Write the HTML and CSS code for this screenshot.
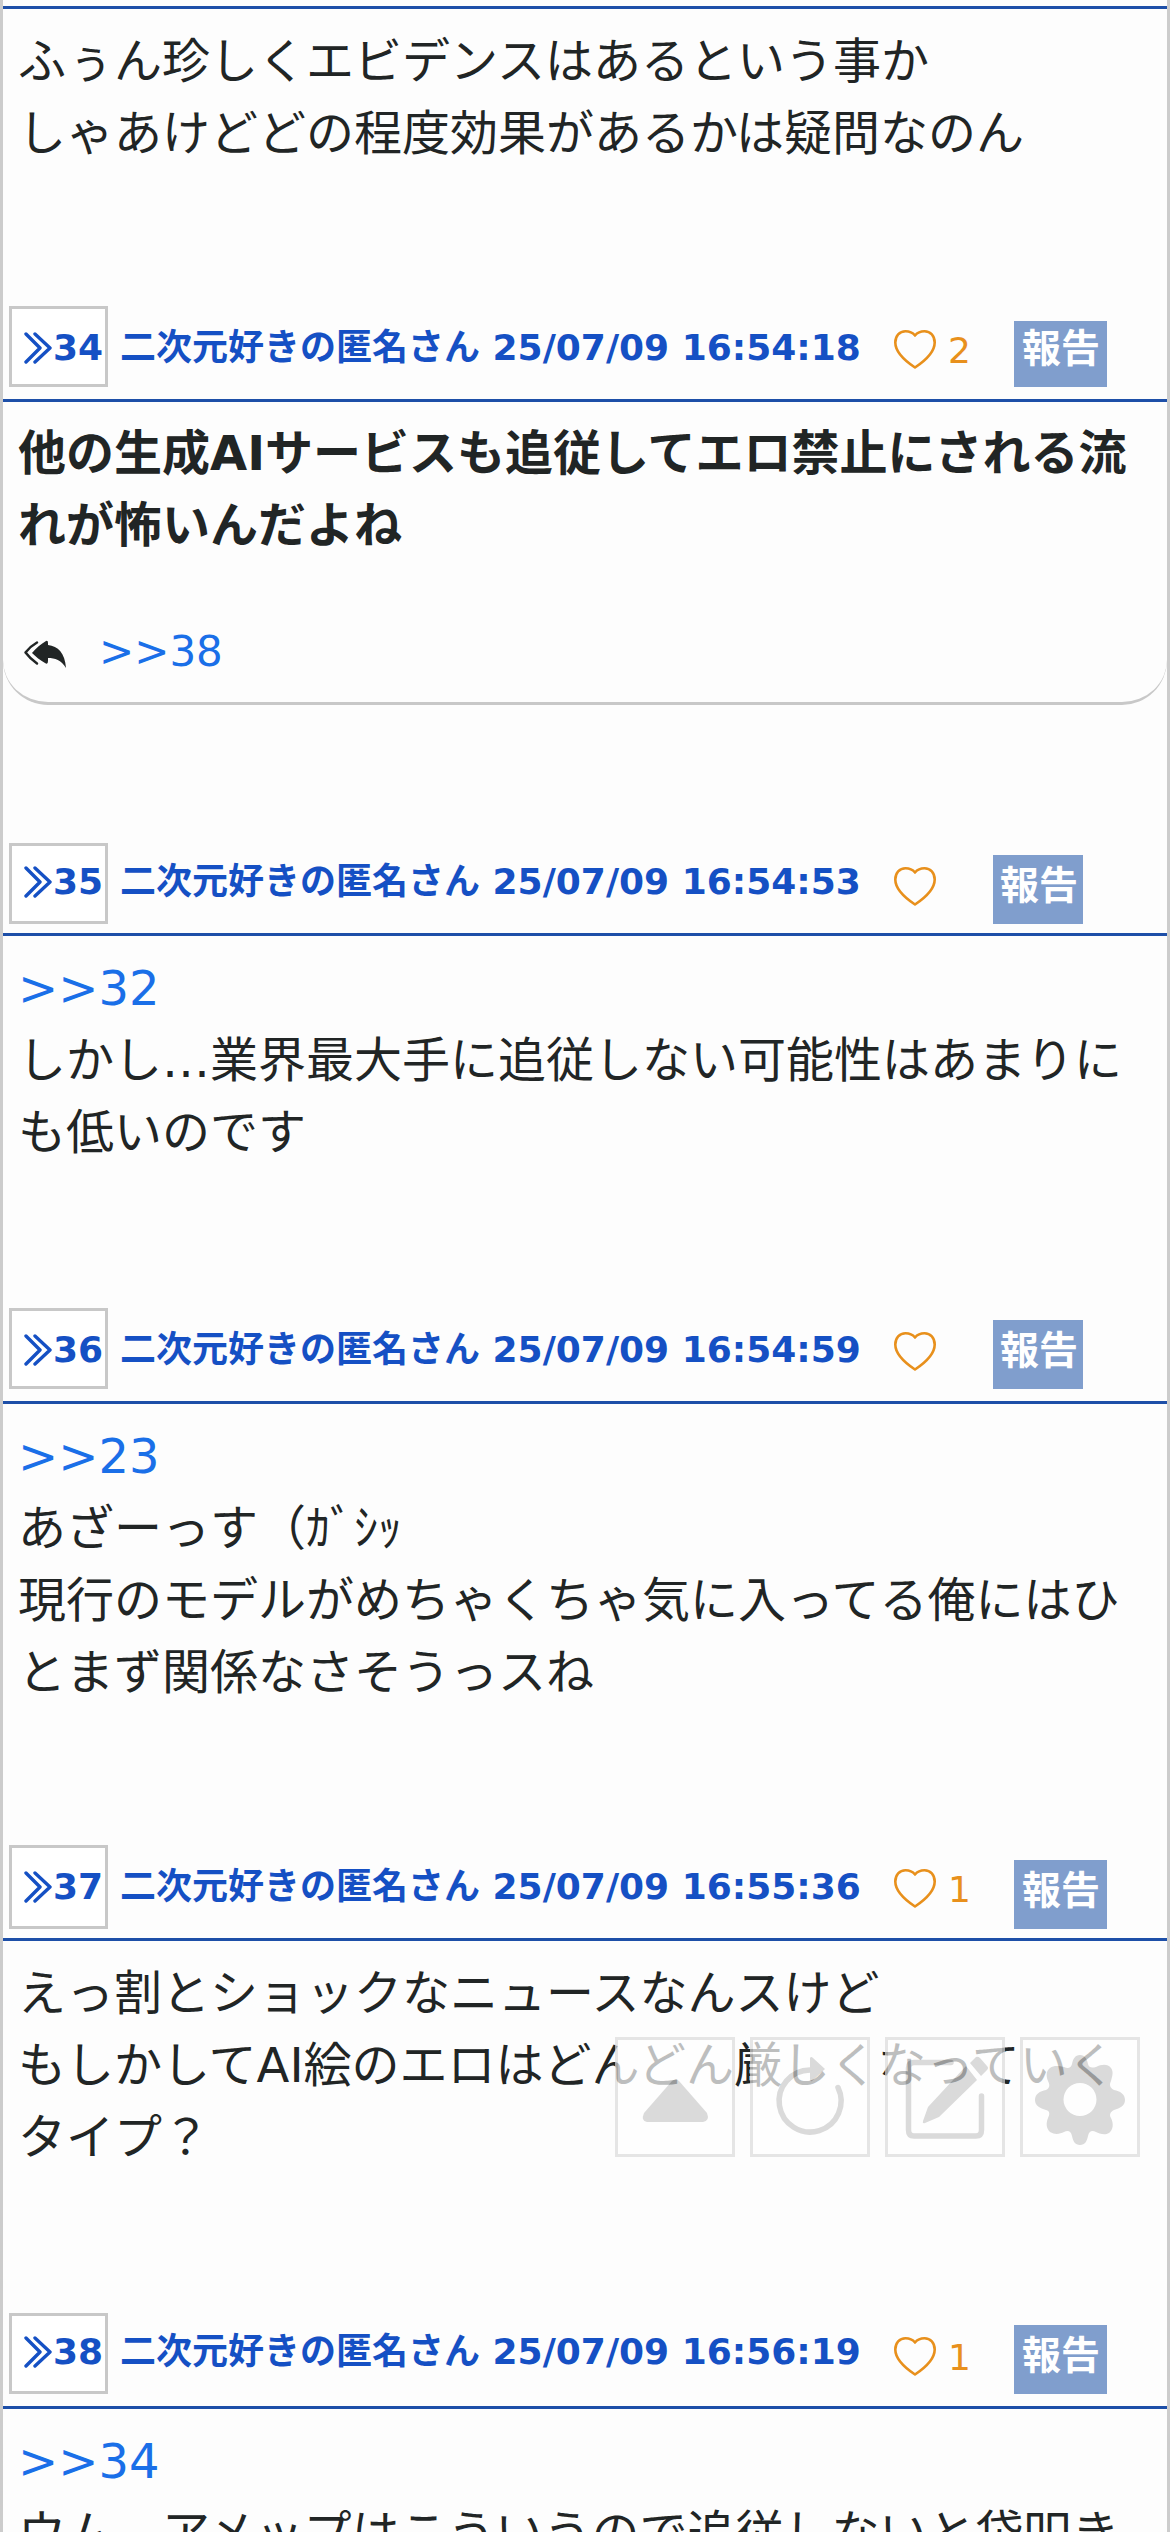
FILE: index.html
```
<!DOCTYPE html>
<html lang="ja">
<head>
<meta charset="utf-8">
<title>スレッド</title>
<link rel="stylesheet" href="styles.css">
</head>
<body>
<svg class="defs" width="0" height="0">
  <symbol id="chev" viewBox="0 0 28 32"><path d="M2 2L16 16L2 30M11 2L26 16L11 30" fill="none" stroke="currentColor" stroke-width="3.400" stroke-linecap="round" stroke-linejoin="round"/></symbol>
  <symbol id="heart" viewBox="0 0 42 39"><path d="M21 5.5C23.5 2.5 27 1.3 30.5 1.3C36.5 1.3 40.7 6 40.7 12.5C40.7 22 31.5 30.5 21 37.5C10.500 30.5 1.300 22 1.300 12.500C1.300 6 5.500 1.300 11.500 1.300C15 1.300 18.500 2.500 21 5.500Z" fill="none" stroke="currentColor" stroke-width="2.6" stroke-linejoin="round"/></symbol>
</svg>
<main class="thread">
  <article class="post first">
    <div class="body">ふぅん珍しくエビデンスはあるという事か<br>しゃあけどどの程度効果があるかは疑問なのん</div>
  </article>

  <article class="post">
    <header class="head h34">
      <span class="num"><svg class="chev"><use href="#chev"/></svg>34</span>
      <span class="name">二次元好きの匿名さん 25/07/09 16:54:18</span>
      <svg class="heart"><use href="#heart"/></svg><span class="count">2</span>
      <span class="report">報告</span>
    </header>
    <div class="body popular">他の生成AIサービスも追従してエロ禁止にされる流<br>れが怖いんだよね
      <div class="replies">
        <svg class="reply-icon" viewBox="0 0 42 27"><path d="M8 13C12 8 17 4 22 1Q24 0 24 3V5C34 6 41 13 42 28C37 20 31 18 24 18V21Q24 25 21 23C16 20 12 17 8 13Z" fill="currentColor"/><path d="M13 2.500Q6 6.500 1.500 12.500Q6 18.500 13 23.500" fill="none" stroke="currentColor" stroke-width="2.500" stroke-linecap="round" stroke-linejoin="round"/></svg>
        <a class="link">&gt;&gt;38</a>
      </div>
    </div>
  </article>

  <article class="post">
    <header class="head h35">
      <span class="num"><svg class="chev"><use href="#chev"/></svg>35</span>
      <span class="name">二次元好きの匿名さん 25/07/09 16:54:53</span>
      <svg class="heart"><use href="#heart"/></svg><span class="count empty"></span>
      <span class="report">報告</span>
    </header>
    <div class="body wide"><a class="link">&gt;&gt;32</a><br>しかし…業界最大手に追従しない可能性はあまりに<br>も低いのです</div>
  </article>

  <article class="post">
    <header class="head h36">
      <span class="num"><svg class="chev"><use href="#chev"/></svg>36</span>
      <span class="name">二次元好きの匿名さん 25/07/09 16:54:59</span>
      <svg class="heart"><use href="#heart"/></svg><span class="count empty"></span>
      <span class="report">報告</span>
    </header>
    <div class="body"><a class="link">&gt;&gt;23</a><br>あざーっす（ｶﾞｼｯ<br>現行のモデルがめちゃくちゃ気に入ってる俺にはひ<br>とまず関係なさそうっスね</div>
  </article>

  <article class="post">
    <header class="head h37">
      <span class="num"><svg class="chev"><use href="#chev"/></svg>37</span>
      <span class="name">二次元好きの匿名さん 25/07/09 16:55:36</span>
      <svg class="heart"><use href="#heart"/></svg><span class="count">1</span>
      <span class="report">報告</span>
    </header>
    <div class="body wide">えっ割とショックなニュースなんスけど<br>もしかしてAI絵のエロはどんどん厳しくなっていく<br>タイプ？</div>
  </article>

  <article class="post">
    <header class="head h38">
      <span class="num"><svg class="chev"><use href="#chev"/></svg>38</span>
      <span class="name">二次元好きの匿名さん 25/07/09 16:56:19</span>
      <svg class="heart"><use href="#heart"/></svg><span class="count">1</span>
      <span class="report">報告</span>
    </header>
    <div class="body"><a class="link">&gt;&gt;34</a><br>ウム…アメップはこういうので追従しないと袋叩き</div>
  </article>
</main>

<nav class="tools">
  <span class="tool"><svg viewBox="0 0 120 120"><path d="M57 44Q60.500 41 64 44L92 76Q95 84 88 85H32Q25.500 84 29 76Z" fill="#ccc"/></svg></span>
  <span class="tool"><svg viewBox="0 0 120 120"><path d="M88 50.500A31 31 0 1 1 60 33" fill="none" stroke="#ccc" stroke-width="5.500" stroke-linecap="round"/><path d="M60 21Q61 19 63 21L75 32L62 44Q60 45 60 42Z" fill="#ccc"/></svg></span>
  <span class="tool"><svg viewBox="0 0 120 120"><path d="M66 25.500H29Q23.500 25.500 23.500 31V93Q23.500 99 29 99H91Q96.500 99 96.500 93V59" fill="none" stroke="#ccc" stroke-width="5.500" stroke-linecap="round"/><path d="M81 29L92 43L54 80L40 86Q37 87 38 84L43 70Z M85 26L91 20Q93 19 95 21L102 29Q104 31 102 33L96 39Z" fill="#ccc"/></svg></span>
  <span class="tool"><svg viewBox="0 0 120 120"><path fill="#ccc" fill-rule="evenodd" d="M60 18C65 18 67 22 68 27C69 31 72 31 76 30C82 27 88 27 91 31C94 35 92 40 91 44C89 48 90 51 94 53C100 54 105 57 105 63C105 69 100 71 94 73C90 75 89 78 91 81C94 87 93 93 89 96C84 99 79 96 76 95C72 93 69 94 68 99C67 104 65 108 60 108C55 108 53 104 52 99C51 94 48 93 44 95C40 97 35 98 30 95C26 91 26 86 28 81C30 77 30 74 26 73C20 71 15 69 15 63C15 57 20 54 26 53C30 51 30 48 28 44C26 39 26 34 30 31C34 28 39 29 44 30C48 32 51 31 52 27C53 22 55 18 60 18ZM60 46A16.500 16.500 0 1 0 60 79A16.500 16.500 0 1 0 60 46Z"/></svg></span>
</nav>
</body>
</html>
```
FILE: styles.css
```
* { box-sizing: border-box; }
html { height: 2532px; overflow: hidden; }
body {
  margin: 0;
  height: 2532px;
  overflow: hidden;
  background: #fdfdfd;
  color: #212525;
  font-family: "DejaVu Sans", "Noto Sans CJK JP", sans-serif;
  font-size: 48px;
  line-height: 72px;
}
.defs { position: absolute; }
.thread {
  height: 2532px;
  overflow: hidden;
  padding-top: 6px;
  border-left: 3px solid #ccc;
  border-right: 3px solid #ccc;
}
.first { border-top: 3px solid #1d4fa8; }
.body { padding: 16px 15px 134px; white-space: nowrap; }
.body.wide { padding-bottom: 137px; }
.link { color: #1a6fe8; }

.body.popular {
  height: 303px;
  margin-bottom: 132px;
  padding-top: 15px;
  padding-bottom: 0;
  font-weight: bold;
  border-bottom: 3px solid #c8c8c8;
  border-radius: 0 0 45px 45px;
}
.replies {
  display: flex;
  align-items: center;
  gap: 33px;
  margin-top: 55px;
  padding-left: 6px;
  font-size: 42px;
  font-weight: normal;
}
.reply-icon { width: 42px; height: 27px; margin-top: 2px; overflow: visible; }

.head {
  --box-h: 81px;
  --box-b: 12px;
  --base: 39px;
  --heart-b: 30px;
  --rep-h: 69px;
  --rep-text: 34px;
  display: flex;
  align-items: flex-end;
  height: 99px;
  padding-left: 6px;
  border-bottom: 3px solid #1d4fa8;
  font-size: 36px;
  line-height: 36px;
  white-space: nowrap;
}
.h34 { --rep-h: 66px; }
.h35 { --box-b: 9px; --heart-b: 27px; --rep-text: 31px; }
.h37 { --box-h: 84px; --box-b: 9px; --rep-text: 31px; }
.h38 { --base: 42px; }

.num {
  display: flex;
  align-items: flex-end;
  width: 99px;
  height: var(--box-h);
  margin-bottom: var(--box-b);
  padding: 0 0 calc(var(--base) - var(--box-b) - 9px) 12px;
  border: 3px solid #c8c8c8;
  background: #fff;
  color: #1550c4;
  font-weight: bold;
}
.chev { flex: none; width: 28px; height: 32px; margin: 0 1px 2px 0; }
.name {
  width: 774px;
  margin: 0 0 calc(var(--base) - 6px) 12px;
  color: #1550c4;
  font-weight: bold;
}
.heart { flex: none; width: 42px; height: 39px; margin: 0 0 var(--heart-b) 0; color: #e8901c; }
.count { width: 66px; margin: 0 0 30px 12px; color: #e8901c; }
.count.empty { width: 45px; }
.report {
  display: flex;
  align-items: flex-end;
  width: 93px;
  height: var(--rep-h);
  margin-bottom: var(--box-b);
  padding: 0 0 calc(var(--rep-text) - var(--box-b) - 3px) 8px;
  background: #809ecd;
  color: #fff;
  font-size: 39px;
  line-height: 39px;
  font-weight: bold;
}
.count.empty + .report { width: 90px; padding-left: 7px; }

.tools {
  position: absolute;
  left: 615px;
  top: 2037px;
  display: flex;
  gap: 15px;
  opacity: .7;
}
.tool { width: 120px; height: 120px; border: 3px solid #dcdcdc; background: #fff; }
.tool svg { display: block; width: 120px; height: 120px; margin: -3px; }
```
